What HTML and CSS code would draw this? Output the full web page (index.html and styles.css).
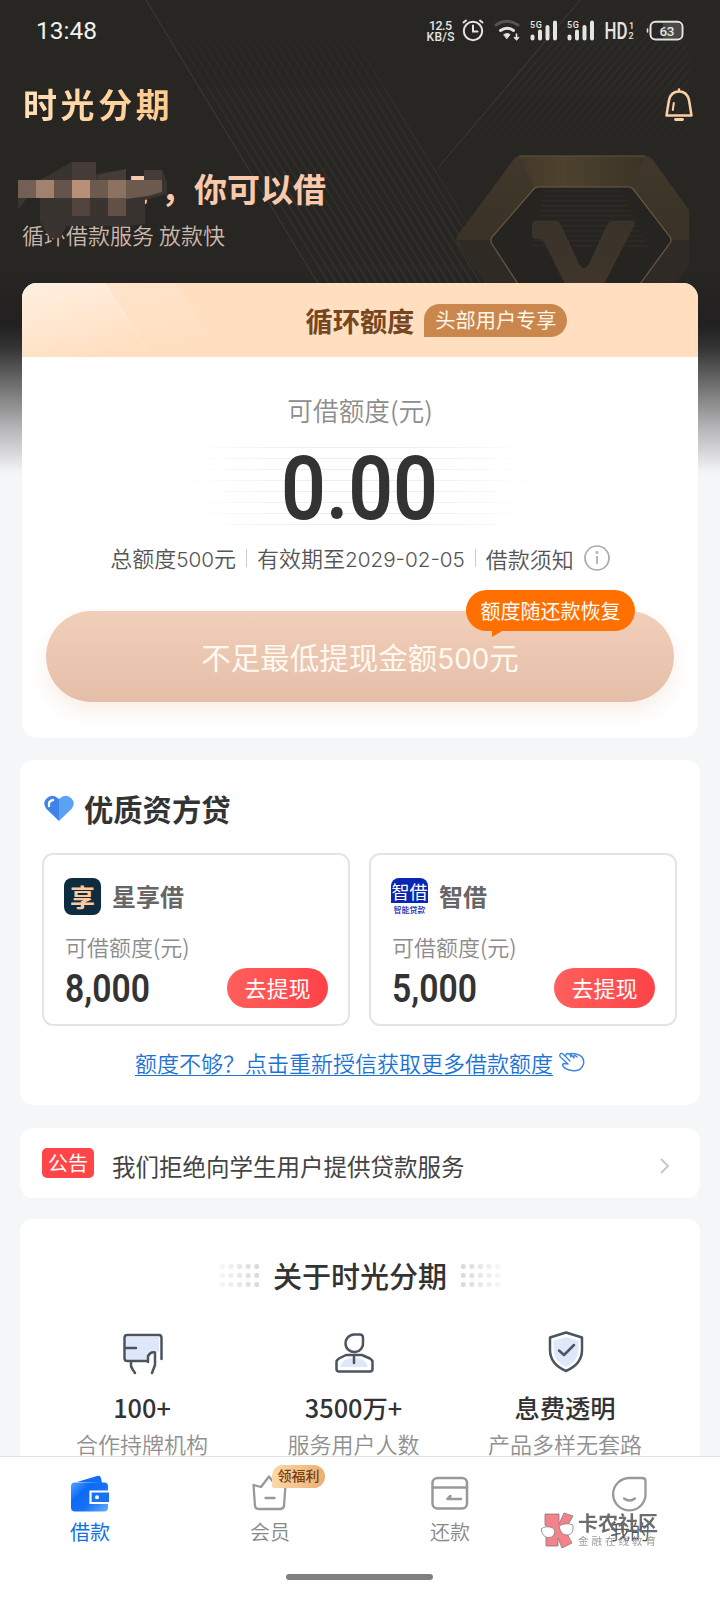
FILE: index.html
```html
<!DOCTYPE html>
<html lang="zh-CN">
<head>
<meta charset="utf-8">
<title>时光分期</title>
<link rel="stylesheet" href="styles.css">
</head>
<body>
<div class="screen">
  <svg class="backdrop" width="720" height="290" viewBox="0 0 720 290">
    <defs>
      <pattern id="pl" width="8" height="8" patternUnits="userSpaceOnUse" patternTransform="translate(145 0) skewX(31.7)"><rect width="1.6" height="8" fill="#35332e"/></pattern>
      <pattern id="pr" width="8" height="8" patternUnits="userSpaceOnUse" patternTransform="translate(580 0) skewX(-40.4)"><rect width="1.6" height="8" fill="#33302b"/></pattern>
      <pattern id="ph" width="8" height="5" patternUnits="userSpaceOnUse"><rect width="8" height="1.5" fill="#2d2a25"/></pattern>
      <linearGradient id="fade" x1="0" y1="0" x2="0" y2="1"><stop offset="0" stop-color="#fff" stop-opacity=".05"/><stop offset=".45" stop-color="#fff" stop-opacity=".8"/><stop offset="1" stop-color="#fff"/></linearGradient>
      <linearGradient id="fade2" x1="0" y1="0" x2="0" y2="1"><stop offset="0" stop-color="#fff" stop-opacity=".3"/><stop offset=".4" stop-color="#fff"/><stop offset="1" stop-color="#fff" stop-opacity="0"/></linearGradient>
      <linearGradient id="top" x1="0" x2="1"><stop offset="0" stop-color="#453a28"/><stop offset=".35" stop-color="#4d422e"/><stop offset="1" stop-color="#3c3326"/></linearGradient>
      <linearGradient id="side" x1="0" y1="0" x2="0" y2="1"><stop offset="0" stop-color="#41382b"/><stop offset="1" stop-color="#382f26"/></linearGradient>
      <linearGradient id="vee" x1="0" y1="0" x2="0" y2="1"><stop offset="0" stop-color="#38332a"/><stop offset="1" stop-color="#40352a"/></linearGradient>
      <mask id="ml"><rect width="720" height="290" fill="url(#fade)"/></mask>
      <mask id="mr"><rect width="720" height="170" fill="url(#fade2)"/></mask>
    </defs>
    <path d="M147 0H333L508 290H326Z" fill="url(#pl)" mask="url(#ml)"/>
    <path d="M580 0H689V130L660 165H440Z" fill="url(#pr)" mask="url(#mr)"/>
    <path d="M146 0L322 290" stroke="#403d38" fill="none"/>
    <path d="M580 0L437 169" stroke="#3e3b35" fill="none"/>
    <path d="M519 156H645Q650 156 653 160L689 210V265L675 283H485L458 244Q455 240 458 235L514 159Q516 156 519 156Z" fill="url(#side)"/>
    <path d="M457 240H492L518 283H485Z" fill="#302a24"/>
    <path d="M672 240H689V265L675 283H640Z" fill="#302a26"/>
    <path d="M520 156H646L631 187H534Z" fill="url(#top)"/>
    <path d="M536 187H631L670 237Q672 240 670 243L640 284H518L492 244Q490 240 492 237Z" fill="#252420"/>
    <path d="M545 190H620L650 250H530Z" fill="url(#ph)"/>
    <path d="M518 284L492 244Q490 240 492 237L533 190Q535 187 538 187H629Q631 187 633 189L670 237Q672 240 670 243L640 284" fill="none" stroke="#6a5a44" stroke-width="1.2"/>
    <path d="M519 156H645" stroke="#62543a" fill="none"/>
    <path d="M535 221H556Q559 221 561 225L579 264Q584 272 589 264L607 225Q609 221 613 221H632Q636 221 634 226L604 284H565L544 242Q541 238 535 239Q531 238 532 231V226Q532 221 535 221Z" fill="url(#vee)"/>
  </svg>

  <header class="status">
    <span class="clock">13:48</span>
    <svg class="status-icons" width="268" height="30" viewBox="420 15 268 30" fill="none" stroke="#e4e4e2" stroke-linecap="round">
      <g class="svg-text">
        <text x="429" y="30" font-size="12.5" textLength="23">12.5</text>
        <text x="426.500" y="41.300" font-size="12" textLength="28">KB/S</text>
        <text x="530" y="28" font-size="9" textLength="12">5G</text>
        <text x="567" y="28" font-size="9" textLength="12">5G</text>
        <text x="604.500" y="38.500" font-size="23" textLength="23" lengthAdjust="spacingAndGlyphs">HD</text>
        <text x="629" y="28.500" font-size="9" font-weight="700">1</text>
        <text x="628.500" y="39" font-size="9" font-weight="700">2</text>
      </g>
      <circle cx="473" cy="31" r="9.200" stroke-width="2"/><path d="M473 25.500V31.500H477.500M463.500 22.500L466 20.500M482.500 22.500L480 20.500" stroke-width="2"/>
      <path d="M496 25Q507 17.500 518 25" stroke="#555452" stroke-width="3"/><path d="M500.500 30.500Q507 26 513.500 30.500" stroke-width="3"/><path d="M504 34.500Q507 32.500 510 34.500L507 38.500Z" fill="#e4e4e2" stroke-width="1"/><path d="M516.500 34V39M514.500 37.500L516.500 39.500L518.500 37.500" stroke-width="1.600"/>
      <path d="M532.500 36.500V38.500M540 31.500V38.500M547.500 27V38.500M555 22.500V38.500M569.500 36.500V38.500M577 31.500V38.500M584.500 27V38.500M592 22.500V38.500" stroke-width="4"/>
      <rect x="650.500" y="21.800" width="32" height="17.600" rx="5" stroke-width="2"/><path d="M663 23H677Q681 23 681 27V34Q681 38 677 38H663Z" fill="#4a4947" stroke="none"/><path d="M647.500 29V32" stroke-width="1.600"/>
      <g class="svg-text"><text x="659.500" y="35.700" font-size="13.500" font-weight="600" textLength="15">63</text></g>
    </svg>
  </header>

  <main class="content">
    <div class="brand">
      <h1 class="brand-name">时光分期</h1>
      <svg width="30" height="36" viewBox="0 0 30 36" fill="none" stroke="#ffcfa4" stroke-width="2.500" stroke-linejoin="round" stroke-linecap="round"><path d="M2.500 28.500L5 13Q7 4.500 15 4.500T25 13L27.500 28.500ZM15 4V2.500"/><path d="M9.800 16L8.800 23" stroke-width="2"/><path d="M11.500 32.500H18.500" stroke-width="2.800"/></svg>
    </div>
    <div class="greeting">
      <p class="hello">了，你可以借</p>
      <p class="tagline">循环借款服务 放款快</p>
      <svg class="mosaic" width="152" height="86" viewBox="16 158 152 86">
        <path d="M18 180H40L72 162H96V174L126 169V180H144V170H162L167 182V194L145 200V224H62V238H50L40 222V198H27L18 210Z" fill="#3a3431"/>
        <path d="M72 162H96V180H72ZM98 175L126 169V180H98ZM144 170H162V180H144Z" fill="#453c38"/>
        <path d="M18 180H162V192L148 196L126 199V216H108V198H18Z" fill="#6d5a4f"/>
        <path d="M18 180H36V198H18Z" fill="#735f53"/><path d="M36 180H54V198H36Z" fill="#a1826f"/><path d="M54 180H72V198H54Z" fill="#64544b"/><path d="M72 180H90V198H72Z" fill="#b98f78"/><path d="M108 180H126V198H108Z" fill="#8d7262"/>
        <path d="M72 198H90V216H72Z" fill="#51433d"/><path d="M108 198H126V216H108Z" fill="#625047"/>
        <path d="M44 216H145V224L126 226H66L61 236L53 239L45 226Z" fill="#393331"/>
      </svg>
    </div>

    <section class="card quota">
      <div class="quota-head">
        <svg class="sheen" width="230" height="74" viewBox="0 0 230 74"><defs><linearGradient id="sh" x1="0" y1="0" x2=".5" y2="1"><stop offset="0" stop-color="#fff" stop-opacity=".4"/><stop offset="1" stop-color="#fff" stop-opacity="0"/></linearGradient></defs><path d="M0 0H83L130 74H0Z" fill="url(#sh)"/><path d="M0 0H153L197 66V74H0Z" fill="url(#sh)" opacity=".5"/><path d="M83 0L125 66" stroke="#fff" stroke-opacity=".3"/></svg>
        <h2 class="quota-title">循环额度</h2>
        <span class="vip">头部用户专享</span>
      </div>
      <p class="quota-label">可借额度(元)</p>
      <svg class="amount" width="348" height="112" viewBox="186 430 348 112">
        <defs><linearGradient id="ln" x1="0" x2="1"><stop offset="0" stop-color="#eee" stop-opacity="0"/><stop offset=".35" stop-color="#ededed"/><stop offset=".65" stop-color="#ededed"/><stop offset="1" stop-color="#eee" stop-opacity="0"/></linearGradient></defs>
        <path d="M206 447H514V448H206ZM194 458H526V459H194ZM186 469H534V470H186ZM194 480H534V481H194ZM190 491H530V492H190ZM186 502H534V503H186ZM200 513H520V514H200ZM186 524H534V525H186Z" fill="url(#ln)"/>
        <text class="digits" x="281" y="519" font-size="89" textLength="157" lengthAdjust="spacingAndGlyphs">0.00</text>
      </svg>
      <div class="meta">
        <span>总额度<span class="num">500</span>元</span><i class="bar"></i><span>有效期至<span class="num">2029-02-05</span></span><i class="bar"></i><span>借款须知</span>
        <svg width="26" height="26" viewBox="0 0 26 26" fill="none" stroke="#aaa" stroke-width="1.700"><circle cx="13" cy="13" r="12"/><path d="M13 11V19"/><circle cx="13" cy="7.500" r=".6"/></svg>
      </div>
      <div class="cta">不足最低提现金额<span class="num">500</span>元
        <span class="tip">额度随还款恢复</span>
      </div>
    </section>

    <section class="card lenders">
      <h2 class="lenders-title">
        <svg width="30" height="27" viewBox="0 0 30 27"><path d="M15 26L2.500 14Q-2 8 2.500 3.500Q8-2 15 4Z" fill="#3f83e8"/><path d="M15 26L27.500 14Q32 8 27.500 3.500Q22-2 15 4Z" fill="#5aa2f3"/><path d="M5 11Q4 6 9 5" fill="none" stroke="#fff" stroke-width="2.300" stroke-linecap="round"/></svg>
        <span>优质资方贷</span>
      </h2>
      <div class="lender-row">
        <article class="lender">
          <div class="lender-name"><span class="logo logo-dark">享</span>星享借</div>
          <div class="lender-label">可借额度(元)</div>
          <div class="lender-foot"><svg width="88" height="45" viewBox="-2 -7.500 88 45"><text class="digits" x="-1" y="28.500" font-size="38" textLength="85" lengthAdjust="spacingAndGlyphs">8,000</text></svg><span class="go">去提现</span></div>
        </article>
        <article class="lender">
          <div class="lender-name"><span class="logo logo-blue"><b>智借</b><small>智能贷款</small></span>智借</div>
          <div class="lender-label">可借额度(元)</div>
          <div class="lender-foot"><svg width="88" height="45" viewBox="-2 -7.500 88 45"><text class="digits" x="-1" y="28.500" font-size="38" textLength="85" lengthAdjust="spacingAndGlyphs">5,000</text></svg><span class="go">去提现</span></div>
        </article>
      </div>
      <div class="more"><span class="more-link">额度不够？点击重新授信获取更多借款额度</span>
        <svg width="26" height="20" viewBox="0 0 26 20" fill="none" stroke="#3f86d8" stroke-width="1.400" stroke-linejoin="round" stroke-linecap="round"><path d="M11 9L4 2Q2 0.500 1 2.500T2.500 6L9 12L5 11.500Q3 12 4 14Q7 18 13 18.500Q22 20 24.500 12Q26 4 17 2Q13 1 10 2L8 1.500L6.500 3.500M12 5Q10 2 13 3.500L15 6M15 4.500Q15 2 18 5"/></svg>
      </div>
    </section>

    <section class="card notice">
      <span class="tag">公告</span><span class="notice-text">我们拒绝向学生用户提供贷款服务</span>
      <svg width="10" height="16" viewBox="0 0 10 16" fill="none" stroke="#c8c8c8" stroke-width="2"><path d="M1 1L8 8L1 15"/></svg>
    </section>

    <section class="card about">
      <h2 class="about-title"><i class="dots dots-left"></i>关于时光分期<i class="dots"></i></h2>
      <div class="facts">
        <div class="fact">
          <svg width="44" height="44" viewBox="121 1331 44 44" fill="none" stroke="#4b545f" stroke-width="2.500" stroke-linejoin="round" stroke-linecap="round"><path d="M127 1337H160V1352L153 1351L149 1360H127Z" fill="#dfe8fb" stroke="none"/><path d="M149 1361H128Q125.500 1361 125.500 1358V1338Q125.500 1335 128 1335H160Q162.500 1335 162.500 1338V1359M126 1348H137M132 1362V1366Q133 1369 136 1373M149 1362V1356Q152 1351 156 1352.500V1365L153 1373"/></svg>
          <b class="fact-num">100+</b><span class="fact-label">合作持牌机构</span>
        </div>
        <div class="fact">
          <svg width="44" height="44" viewBox="332 1331 44 44" fill="none" stroke="#4b545f" stroke-width="2.500" stroke-linejoin="round" stroke-linecap="round"><path d="M340 1367Q342 1358 354 1358T368 1367Z" fill="#dfe8fb" stroke="none"/><path d="M354 1334.500H360Q363 1334.500 363 1338V1342A8.800 8.800 0 1 1 354 1334.500ZM346 1355H362L370 1358.500Q372.500 1360 372.500 1362V1369Q372.500 1371.500 370 1371.500H339Q336.500 1371.500 336.500 1369V1362Q336.500 1360 339 1358.500ZM354 1355V1363"/></svg>
          <b class="fact-num">3500万+</b><span class="fact-label">服务用户人数</span>
        </div>
        <div class="fact">
          <svg width="44" height="44" viewBox="543.500 1331 44 44" fill="none" stroke="#4b545f" stroke-width="2.500" stroke-linejoin="round" stroke-linecap="round"><path d="M566.500 1332.500L582.500 1337.500V1350Q582.500 1364 566.500 1371Q550.500 1364 550.500 1350V1337.500Z"/><path d="M566.500 1337L579 1341V1350Q579 1361 566.500 1367Q554 1361 554 1350V1341Z" fill="#dfe8fb" stroke="none"/><path d="M559.500 1350.500L564.500 1355L574.500 1345"/></svg>
          <b class="fact-num">息费透明</b><span class="fact-label">产品多样无套路</span>
        </div>
      </div>
    </section>
  </main>

  <nav class="tabs">
    <div class="tab tab-on">
      <svg width="38" height="38" viewBox="71 1475 38 38"><defs><linearGradient id="wal" x1="0" y1=".2" x2="1" y2="1"><stop offset="0" stop-color="#4394ff"/><stop offset=".25" stop-color="#0c6af5"/><stop offset=".55" stop-color="#1671f7"/><stop offset="1" stop-color="#67b0ff"/></linearGradient></defs><path d="M77 1482L97 1476Q100 1475 101 1478L102 1483Z" fill="#126ef6"/><rect x="71" y="1482.500" width="37" height="29" rx="4" fill="url(#wal)"/><path d="M109 1491.500H90.500V1503H109" fill="#1972ef" stroke="#fff" stroke-width="2.200"/><circle cx="97" cy="1497.200" r="2" fill="#fff"/></svg>
      <span>借款</span>
    </div>
    <div class="tab">
      <svg width="38" height="38" viewBox="251 1475 38 38" fill="none" stroke="#999" stroke-width="2.300" stroke-linejoin="round" stroke-linecap="round"><path d="M253.500 1485L261 1487L269 1476.500L277 1487L285.500 1485L284 1506Q283.500 1509 280 1509H258.500Q255.500 1509 255 1506ZM265.500 1498H274.500"/></svg>
      <span>会员</span><em class="perk">领福利</em>
    </div>
    <div class="tab">
      <svg width="38" height="38" viewBox="431 1475 38 38" fill="none" stroke="#999" stroke-width="2.500" stroke-linejoin="round" stroke-linecap="round"><rect x="432.500" y="1478" width="34.500" height="30.500" rx="5"/><path d="M433 1487.500H467M461 1499H447.500L450.500 1496"/></svg>
      <span>还款</span>
    </div>
    <div class="tab">
      <svg width="38" height="38" viewBox="611 1475 38 38" fill="none" stroke="#999" stroke-width="2.300" stroke-linejoin="round" stroke-linecap="round"><path d="M629 1478H642Q645.500 1478 645.500 1481V1493.500A16.200 16.200 0 1 1 629 1478ZM624 1498.500Q629.500 1502.500 635 1498.500"/></svg>
      <span class="mine">我的</span>
    </div>
    <div class="watermark">
      <svg width="36" height="38" viewBox="540 1512 36 38" fill="#f57b83" stroke="#777" stroke-width=".8"><path d="M545 1514H559V1524L564 1513L573 1516L565 1530L572 1543L562 1548L558 1538V1546H546V1534L550 1529L545 1525Z"/><path d="M541 1529Q546 1525 553 1528Q557 1532 552 1537Q543 1540 541 1529ZM559 1526Q566 1522 573 1525Q574 1534 568 1535Q561 1536 559 1526Z" fill="#fff"/></svg>
      <div class="wm-text"><b>卡农社区</b><small>金融在线教育</small></div>
    </div>
    <i class="home-bar"></i>
  </nav>
</div>
</body>
</html>
```
FILE: styles.css
```css
* { box-sizing: border-box; margin: 0; padding: 0; }
body { font-family: "Noto Sans CJK SC", sans-serif; color: #333; }
i, em { font-style: normal; }
svg { display: block; flex: none; }

.screen {
  position: relative;
  display: flex;
  flex-direction: column;
  width: 720px;
  height: 1600px;
  overflow: hidden;
  background: linear-gradient(#272623 0, #272623 270px, #222020 325px, #343434 348px, #777 390px, #b8b8ba 430px, #f5f6f8 474px) #f5f6f8;
}
.backdrop { position: absolute; left: 0; top: 0; }

.status {
  position: relative;
  display: flex;
  justify-content: space-between;
  align-items: center;
  height: 60px;
  padding: 0 32px 0 36px;
  color: #f2f2f0;
  font-family: Roboto, sans-serif;
}
.clock { font-size: 24.5px; line-height: 30px; padding-top: 2px; }
.svg-text { font-family: Roboto, sans-serif; fill: #e4e4e2; stroke: none; }
.svg-text text { font-weight: 500; }

.content { position: relative; flex: none; height: 1396px; overflow: hidden; }
.brand { display: flex; justify-content: space-between; align-items: center; height: 90px; padding: 0 26px 0 23px; }
.brand-name {
  margin-top: -3px;
  font-size: 34px;
  font-weight: 700;
  line-height: 50px;
  letter-spacing: 3.600px;
  background: linear-gradient(90deg, #ffe0b6, #ffc98c);
  background-clip: text;
  -webkit-background-clip: text;
  color: transparent;
}
.greeting { position: relative; height: 133px; padding: 16px 0 0 22px; }
.hello { padding-left: 106px; font-size: 33px; font-weight: 700; line-height: 44px; color: #fac9ab; }
.tagline { margin-top: 8px; font-size: 22px; line-height: 32px; font-weight: 350; color: #cdb8ad; }
.mosaic { position: absolute; left: 16px; top: 8px; }

.card { margin: 0 20px; background: #fff; border-radius: 13px; }
.quota { margin: 0 22px; height: 455px; border-radius: 15px; }
.quota-head {
  position: relative;
  display: flex;
  justify-content: center;
  align-items: center;
  gap: 10px;
  height: 74px;
  padding-left: 197px;
  padding-right: 44px;
  border-radius: 15px 15px 0 0;
  overflow: hidden;
  background: #ffdfc0;
}
.sheen { position: absolute; left: 0; top: 0; }
.quota-title { font-size: 27.200px; font-weight: 700; line-height: 40px; color: #754620; }
.vip { padding: 0 11px; border-radius: 16px 17px 17px 0; background: #c9874d; color: #fff5e8; font-size: 20.200px; line-height: 32px; height: 33px; margin-top: 1px; }
.quota-label { margin-top: 34px; text-align: center; font-size: 25.700px; line-height: 37px; font-weight: 350; color: #8d8d8d; }
.amount { margin: 2px auto 0; }
.digits { font-family: Roboto, sans-serif; font-weight: 600; fill: #333; }
.meta { display: flex; justify-content: center; align-items: center; height: 34px; margin-top: -1px; font-size: 22px; line-height: 32px; font-weight: 350; color: #555; }
.meta svg { margin-left: 10px; }
.num { font-family: Inter, sans-serif; font-size: .94em; }
.bar { width: 1px; height: 18px; margin: 0 10px; background: #ccc; }
.cta {
  position: relative;
  height: 91px;
  margin: 36px 24px 0;
  border-radius: 46px;
  background: linear-gradient(#f1cfb9, #e5bea8);
  box-shadow: 0 10px 20px rgba(224, 180, 150, .22);
  text-align: center;
  font-size: 29.500px;
  line-height: 90px;
  font-weight: 400;
  color: #fff9f0;
}
.tip { position: absolute; left: 420px; top: -21px; width: 169px; height: 41px; border-radius: 21px; background: #ff7000; color: #fff; font-size: 20px; line-height: 41px; }
.tip::after { content: ""; position: absolute; left: 26px; top: 40px; border-top: 7px solid #ff7000; border-right: 12px solid transparent; }

.lenders { height: 345px; margin-top: 22px; padding: 26px 23px 0 22px; }
.lenders-title { display: flex; align-items: center; gap: 10px; height: 44px; padding-left: 2px; font-size: 29.300px; line-height: 42px; font-weight: 700; color: #333; }
.lenders-title span { margin-top: -1px; }
.lender-row { display: flex; justify-content: space-between; margin-top: 23px; }
.lender { width: 308px; height: 173px; padding: 22px 20px 0 20px; border: 2px solid #e4e4e4; border-radius: 11px; }
.lender-name { display: flex; align-items: center; height: 38px; font-size: 24px; line-height: 36px; font-weight: 700; color: #666; }
.logo { width: 37px; height: 37px; margin-right: 11px; overflow: hidden; border-radius: 8px; text-align: center; }
.logo-dark { background: #0e2c40; color: #fdc99d; font-size: 25px; line-height: 36px; font-weight: 700; }
.logo-blue { background: linear-gradient(#0927b4 0 25px, #fff 25px); color: #fff; display: flex; flex-direction: column; white-space: nowrap; }
.logo-blue b { font-size: 18px; line-height: 27px; font-weight: 400; }
.logo-blue small { font-size: 8px; line-height: 9px; color: #0927b4; font-weight: 500; }
.lender-label { margin-top: 15px; padding-left: 1px; font-size: 22px; line-height: 32px; font-weight: 350; color: #8c8c8c; }
.lender-foot { display: flex; justify-content: space-between; align-items: center; height: 40px; margin-top: 6px; }
.go { width: 101px; height: 40px; border-radius: 20px; background: linear-gradient(90deg, #ff5f5c, #ff4248); color: #fff; text-align: center; font-size: 22px; line-height: 38px; }
.more { display: flex; justify-content: center; align-items: center; gap: 6px; height: 32px; margin-top: 20px; padding-left: 1px; font-size: 22px; line-height: 30px; font-weight: 350; color: #1c73d4; }
.more-link { border-bottom: 1px solid #1c73d4; line-height: 26px; }

.notice { display: flex; align-items: center; height: 70px; margin-top: 23px; padding: 0 30px 0 22px; }
.tag { width: 52px; height: 30px; border-radius: 5px; background: #ff4548; color: #fff; text-align: center; font-size: 20px; line-height: 30px; }
.notice-text { flex: 1; margin: 6px 0 0 18px; font-size: 23.500px; line-height: 34px; font-weight: 400; color: #444; }
.notice svg { margin-top: 6px; }

.about { height: 260px; margin-top: 21px; padding-top: 34px; }
.about-title { display: flex; justify-content: center; align-items: center; gap: 12px; height: 44px; font-size: 29px; line-height: 44px; font-weight: 500; }
.dots { width: 43px; height: 27px; background: radial-gradient(circle 3px, #d8d8d8 2.200px, transparent 2.900px) 0 0 / 8.600px 9px; -webkit-mask-image: linear-gradient(90deg, #000, rgba(0, 0, 0, .2)); mask-image: linear-gradient(90deg, #000, rgba(0, 0, 0, .2)); }
.dots-left { transform: scaleX(-1); }
.facts { display: grid; grid-template-columns: repeat(3, 211.500px); justify-content: center; margin: 34px 0 0 -13px; }
.fact { display: flex; flex-direction: column; align-items: center; }
.fact-num { margin-top: 15px; font-size: 25.300px; line-height: 35px; font-weight: 500; }
.fact-label { margin-top: 2px; font-size: 22px; line-height: 32px; font-weight: 350; color: #909090; }

.tabs { position: relative; flex: 1; display: flex; border-top: 1px solid #e2e2e2; background: #fff; }
.tab { position: relative; flex: 1; display: flex; flex-direction: column; align-items: center; padding-top: 18px; font-size: 20px; line-height: 28px; font-weight: 350; color: #888; }
.tab span { margin-top: 5px; }
.tab-on { color: #1070ea; font-weight: 400; }
.tab .mine { color: #555; }
.perk { position: absolute; left: 92px; top: 8px; width: 53px; height: 23px; border-radius: 11px 12px 12px 2px; background: linear-gradient(90deg, #fbd9a8, #eaaf70); color: #7b3f14; font-size: 14px; line-height: 21px; font-weight: 500; text-align: center; }
.watermark { position: absolute; left: 540px; top: 55px; display: flex; gap: 2px; opacity: .95; }
.wm-text { display: flex; flex-direction: column; color: #777; padding-top: 1px; }
.wm-text b { font-size: 20px; line-height: 20px; font-weight: 700; color: #666; }
.wm-text small { font-size: 10.500px; line-height: 15px; letter-spacing: 3px; color: #999; }
.home-bar { position: absolute; left: 286px; top: 117px; width: 147px; height: 6px; border-radius: 3px; background: #808080; }
```
